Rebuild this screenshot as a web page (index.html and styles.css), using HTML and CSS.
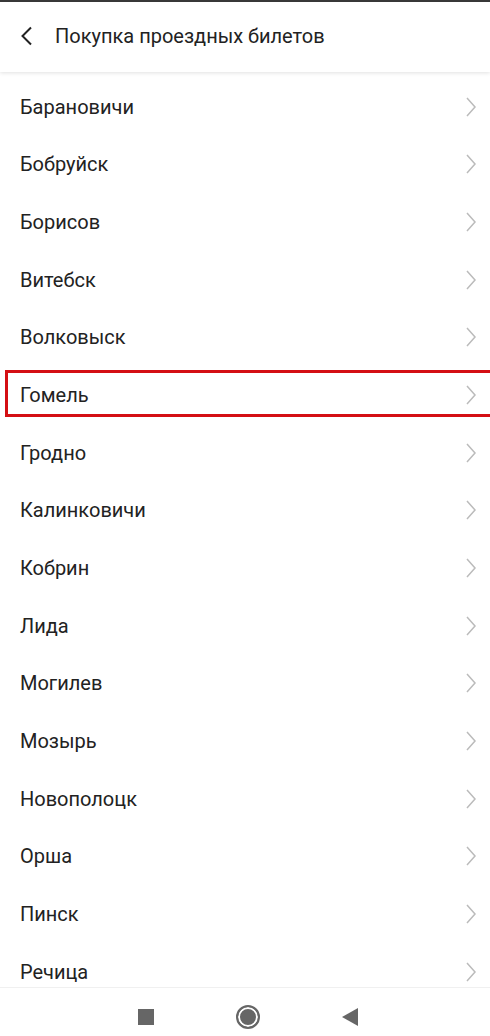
FILE: index.html
```html
<!DOCTYPE html>
<html lang="ru">
<head>
  <meta charset="UTF-8" />
  <meta name="viewport" content="width=device-width, initial-scale=1.0"/>
  <title>Покупка проездных билетов</title>
  <link rel="stylesheet" href="styles.css">
</head>
<body>
  <div class="topline"></div>
  <header class="header">
    <svg class="back" width="14" height="20" viewBox="0 0 14 20"><path d="M12 1.5 L3.5 10 L12 18.5" fill="none" stroke="#222" stroke-width="2"/></svg>
    <span class="title">Покупка проездных билетов</span>
  </header>

  <ul class="cities">
    <li>Барановичи</li>
    <li>Бобруйск</li>
    <li>Борисов</li>
    <li>Витебск</li>
    <li>Волковыск</li>
    <li class="marked">Гомель</li>
    <li>Гродно</li>
    <li>Калинковичи</li>
    <li>Кобрин</li>
    <li>Лида</li>
    <li>Могилев</li>
    <li>Мозырь</li>
    <li>Новополоцк</li>
    <li>Орша</li>
    <li>Пинск</li>
    <li>Речица</li>
  </ul>

  <nav class="navbar">
    <span class="nav-square"></span>
    <span class="nav-circle"></span>
    <svg width="16" height="18" viewBox="0 0 16 18"><path d="M16 0 L16 18 L0 9 Z" fill="#666"/></svg>
  </nav>

<script>
// шеврон справа для каждого города
document.querySelectorAll('.cities li').forEach(li => {
  li.innerHTML = `<span>${li.textContent}</span><svg width="12" height="20" viewBox="0 0 12 20"><path d="M2 1 L10 10 L2 19" fill="none" stroke="#bbb" stroke-width="1.5"/></svg>`;
});
</script>
</body>
</html>
```

FILE: styles.css
```css
body { margin: 0; font-family: Roboto, "Noto Sans", sans-serif; background: #fff; color: #222; overflow: hidden; }
.topline { height: 2px; background: #3a3a3a; }
.header {
  height: 70px;
  display: flex;
  align-items: center;
  padding-left: 19px;
  background: #fff;
  box-shadow: 0 1px 4px rgba(0,0,0,0.12);
  position: relative;
  z-index: 1;
}
.back { margin-right: 22px; margin-top: -2px; }
.title { font-size: 20px; color: #222; margin-top: -2px; }
.cities { list-style: none; margin: 0; padding: 6px 0 0; }
.cities li {
  height: 57.67px;
  box-sizing: border-box;
  display: flex;
  align-items: center;
  justify-content: space-between;
  padding: 0 13px 0 20px;
  font-size: 20px;
  color: #222;
}
.cities li.marked { position: relative; }
.cities li.marked::after {
  content: "";
  position: absolute;
  left: 5px;
  right: -4px;
  top: 4px;
  bottom: 7px;
  border: 3px solid #d40f14;
}
.navbar {
  position: fixed;
  left: 0; right: 0; bottom: 0;
  height: 49px;
  box-sizing: border-box;
  background: #fff;
  border-top: 1px solid #f0f0f0;
  display: flex;
  align-items: center;
  justify-content: center;
  gap: 82px;
  padding: 10px 0 0 5px;
}
.nav-square { width: 16px; height: 16px; background: #666; }
.nav-circle {
  width: 20px;
  height: 20px;
  border-radius: 50%;
  border: 2px solid #666;
  background: #666;
  box-shadow: inset 0 0 0 2px #fff;
}
```
